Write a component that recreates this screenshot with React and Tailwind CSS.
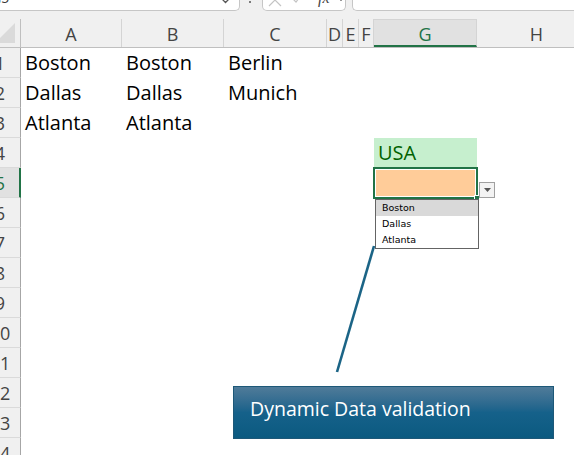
import React from "react";

const cols = [
  { name: "A", w: "w-[101px]" },
  { name: "B", w: "w-[102px]" },
  { name: "C", w: "w-[103px]" },
  { name: "D", w: "w-[16px]" },
  { name: "E", w: "w-[16px]" },
  { name: "F", w: "w-[15px]" },
  { name: "G", w: "w-[103px]" },
  { name: "H", w: "w-[120px]" },
];

const data = {
  1: ["Boston", "Boston", "Berlin"],
  2: ["Dallas", "Dallas", "Munich"],
  3: ["Atlanta", "Atlanta"],
};

const rows = [1, 2, 3, 4, 5, 6, 7, 8, 9, 10, 11, 12, 13, 14];

const TopBar = () => (
  <div className="h-[19px] bg-[#f0f0f0] overflow-hidden">
    <div className="flex h-[28px] -mt-[17px] items-stretch">
      <div className="w-[240px] shrink-0 bg-white border-b border-r border-[#c6c6c6] rounded-br-[5px] flex items-center justify-between pl-0 pr-[9px]">
        <span className="text-[14px] text-[#333] -ml-[9px] mt-[1px]">G5</span>
        <svg width="9" height="6" viewBox="0 0 9 6" className="mt-[8px]">
          <path d="M1 1 L4.5 4.5 L8 1" fill="none" stroke="#555" strokeWidth="1.3" />
        </svg>
      </div>
      <div className="w-[22px] shrink-0 relative">
        <span className="absolute left-[9px] top-[18px] w-[2px] h-[2px] bg-[#555] rounded-full"></span>
      </div>
      <div className="w-[84px] shrink-0 bg-white border border-t-0 border-[#c6c6c6] rounded-b-[5px] flex items-center pl-[5px] gap-[8px]">
        <svg width="14" height="14" viewBox="0 0 14 14" className="mt-[6px]">
          <path d="M1 1 L13 13 M13 1 L1 13" stroke="#c4c4c4" strokeWidth="1.2" />
        </svg>
        <svg width="14" height="12" viewBox="0 0 14 12" className="mt-[2px]">
          <path d="M1 5 L6 10 L13 1" fill="none" stroke="#c4c4c4" strokeWidth="1.2" />
        </svg>
        <span className="italic text-[16px] text-[#444] font-['Liberation_Serif',serif] ml-[6px] mt-[2px]">fx</span>
        <svg width="6" height="4" viewBox="0 0 6 4" className="mt-[6px]">
          <path d="M0.5 0.5 L3 3 L5.5 0.5" fill="none" stroke="#999" strokeWidth="1" />
        </svg>
      </div>
      <div className="w-[6px] shrink-0"></div>
      <div className="flex-1 bg-white border-l border-b border-[#c6c6c6] rounded-bl-[5px]"></div>
    </div>
  </div>
);

const HeaderRow = () => (
  <div className="flex h-[29px] bg-[#f0f0f0] border-b border-[#bfbfbf]">
    <div className="w-[21px] shrink-0 border-r border-[#bfbfbf] relative overflow-hidden">
      <svg width="21" height="28" viewBox="0 0 21 28" className="block">
        <polygon points="15,4 15,24 0,24 0,19" fill="#dadada" />
      </svg>
    </div>
    {cols.map((c) => (
      <div
        key={c.name}
        className={`${c.w} shrink-0 flex items-center justify-center text-[18px] leading-[28px] pt-[2px] border-r border-[#d4d4d4] ${
          c.name === "G"
            ? "bg-[#e1e1e1] text-[#217346] border-b-2 border-b-[#217346] border-t border-t-[#d4d4d4]"
            : "text-[#444]"
        }`}
      >
        {c.name}
      </div>
    ))}
  </div>
);

const Row = ({ n }) => {
  const vals = data[n] || [];
  const active = n === 5;
  return (
    <div className="flex h-[30px]">
      <div
        className={`w-[21px] shrink-0 overflow-hidden border-b border-[#dadada] ${
          active
            ? "bg-[#e1e1e1] border-r-2 border-r-[#217346] text-[#217346]"
            : "bg-[#f0f0f0] border-r border-r-[#a6a6a6] text-[#444]"
        }`}
      >
        <div className="w-[42px] -ml-[21px] text-center text-[18px] leading-[30px]">{n}</div>
      </div>
      {cols.map((c, i) => {
        let content = vals[i] || "";
        let cls = "text-black";
        if (c.name === "G" && n === 4) {
          content = "USA";
          cls = "bg-[#c6efce] text-[#006100]";
        }
        return (
          <div
            key={c.name}
            className={`${c.w} shrink-0 pl-[4px] text-[20px] leading-[30px] whitespace-nowrap ${cls}`}
          >
            {content}
          </div>
        );
      })}
    </div>
  );
};

export default function App() {
  return (
    <div className="w-[574px] h-[455px] overflow-hidden bg-white relative font-['Open_Sans',sans-serif]">
      <TopBar />
      <HeaderRow />
      <div>
        {rows.map((n) => (
          <Row key={n} n={n} />
        ))}
      </div>

      {/* active cell G5 */}
      <div className="absolute left-[373px] top-[167px] w-[105px] h-[32px] border-2 border-[#217346]">
        <div className="w-full h-full border border-white bg-[#ffcc99]"></div>
        <div className="absolute -right-[4px] -bottom-[4px] w-[6px] h-[6px] bg-[#217346] border border-white"></div>
      </div>

      {/* dropdown button */}
      <div className="absolute left-[479px] top-[182px] w-[16px] h-[16px] bg-[#f3f3f3] border border-[#a0a0a0] flex items-center justify-center">
        <svg width="7" height="4" viewBox="0 0 7 4">
          <polygon points="0,0 7,0 3.5,4" fill="#555" />
        </svg>
      </div>

      {/* dropdown list */}
      <div className="absolute left-[375px] top-[199px] w-[104px] h-[50px] bg-white border border-[#646464] font-['DejaVu_Sans',sans-serif] text-[9.5px] text-black">
        <div className="h-[16px] leading-[16px] bg-[#d9d9d9] pl-[6px]">Boston</div>
        <div className="h-[16px] leading-[16px] pl-[6px]">Dallas</div>
        <div className="h-[16px] leading-[16px] pl-[6px]">Atlanta</div>
      </div>

      {/* callout connector */}
      <svg className="absolute left-0 top-0 pointer-events-none" width="574" height="455">
        <line x1="374" y1="246" x2="337" y2="372" stroke="#1b6486" strokeWidth="2.6" />
      </svg>

      {/* callout shape */}
      <div className="absolute left-[233px] top-[386px] w-[321px] h-[53px] border border-[#1d5878] bg-gradient-to-b from-[#4f7b99] via-[#15618a] to-[#0b5a80] pl-[16px] pt-[8px]">
        <span className="text-white text-[19.5px] leading-[28px]">Dynamic Data validation</span>
      </div>
    </div>
  );
}
